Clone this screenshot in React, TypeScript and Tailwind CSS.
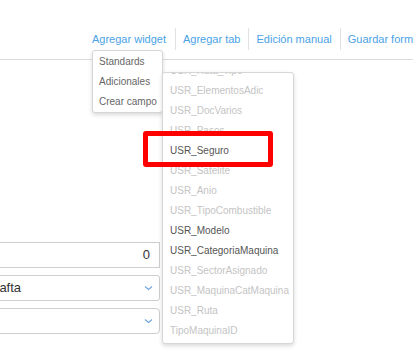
import React from "react";

const items: { label: string; on?: boolean }[] = [
  { label: "USR_Ruta_Tipo" },
  { label: "USR_ElementosAdic" },
  { label: "USR_DocVarios" },
  { label: "USR_Pasos" },
  { label: "USR_Seguro", on: true },
  { label: "USR_Satelite" },
  { label: "USR_Anio" },
  { label: "USR_TipoCombustible" },
  { label: "USR_Modelo", on: true },
  { label: "USR_CategoriaMaquina", on: true },
  { label: "USR_SectorAsignado" },
  { label: "USR_MaquinaCatMaquina" },
  { label: "USR_Ruta" },
  { label: "TipoMaquinaID" },
];

function Chevron() {
  return (
    <svg width="9" height="6" viewBox="0 0 9 6" fill="none">
      <path d="M1 1.5 L4.5 4.5 L8 1.5" stroke="#6fa8de" strokeWidth="1.2" />
    </svg>
  );
}

export default function App() {
  const font = { fontFamily: '"Liberation Sans", Arial, sans-serif' };
  return (
    <div className="relative h-[351px] w-[413px] overflow-hidden bg-white" style={font}>
      {/* nav */}
      <div className="h-[60px] border-b border-[#dcdcdc] pt-[28px]">
        <div className="flex h-[22px] items-center whitespace-nowrap pl-[92px] text-[11px] text-[#4aa2e8]">
          <span className="pr-[9px]">Agregar widget</span>
          <span className="flex h-full items-center border-l border-[#e2e2e2] pl-[7px] pr-[8px]">Agregar tab</span>
          <span className="flex h-full items-center border-l border-[#e2e2e2] pl-[7px] pr-[8px]">Edición manual</span>
          <span className="flex h-full items-center border-l border-[#e2e2e2] pl-[7px]">Guardar formulario</span>
        </div>
      </div>

      {/* form fields */}
      <div className="ml-[-10px] mt-[182px] flex w-[170px] flex-col gap-[7px] text-[13px] text-[#333]">
        <div className="flex h-[26px] items-center justify-end border border-[#cfcfcf] pr-[9px]">0</div>
        <div className="flex h-[26px] items-center justify-between overflow-hidden border border-[#cfcfcf] rounded-r-[3px] pr-[6px]">
          <span className="-ml-[1px]">Nafta</span>
          <Chevron />
        </div>
        <div className="flex h-[26px] items-center justify-end border border-[#cfcfcf] rounded-r-[4px] pr-[6px]">
          <Chevron />
        </div>
      </div>

      {/* small dropdown */}
      <div className="absolute left-[92px] top-[50px] h-[63px] w-[71px] rounded-[3px] border border-[#d6d6d6] bg-white pl-[6px] pt-[1px] text-[10px] text-[#666] shadow-[0_2px_4px_rgba(0,0,0,0.15)]">
        <div className="flex h-[19px] items-center">Standards</div>
        <div className="flex h-[20px] items-center">Adicionales</div>
        <div className="flex h-[20px] items-center">Crear campo</div>
      </div>

      {/* big dropdown */}
      <div className="absolute left-[162px] top-[72px] h-[272px] w-[132px] overflow-hidden rounded-[3px] border border-[#d6d6d6] bg-white text-[10px] shadow-[0_2px_4px_rgba(0,0,0,0.15)]">
        <div className="-mt-[13px] pl-[7px]">
          {items.map((it) => (
            <div
              key={it.label}
              className={`flex h-[20px] items-center ${it.on ? "text-[#555]" : "text-[#c4c4c4]"}`}
            >
              {it.label}
            </div>
          ))}
        </div>
      </div>

      {/* red highlight */}
      <div className="absolute left-[143px] top-[131px] h-[36px] w-[130px] rounded-[3px] border-[5px] border-[#ff0000]" />
    </div>
  );
}
